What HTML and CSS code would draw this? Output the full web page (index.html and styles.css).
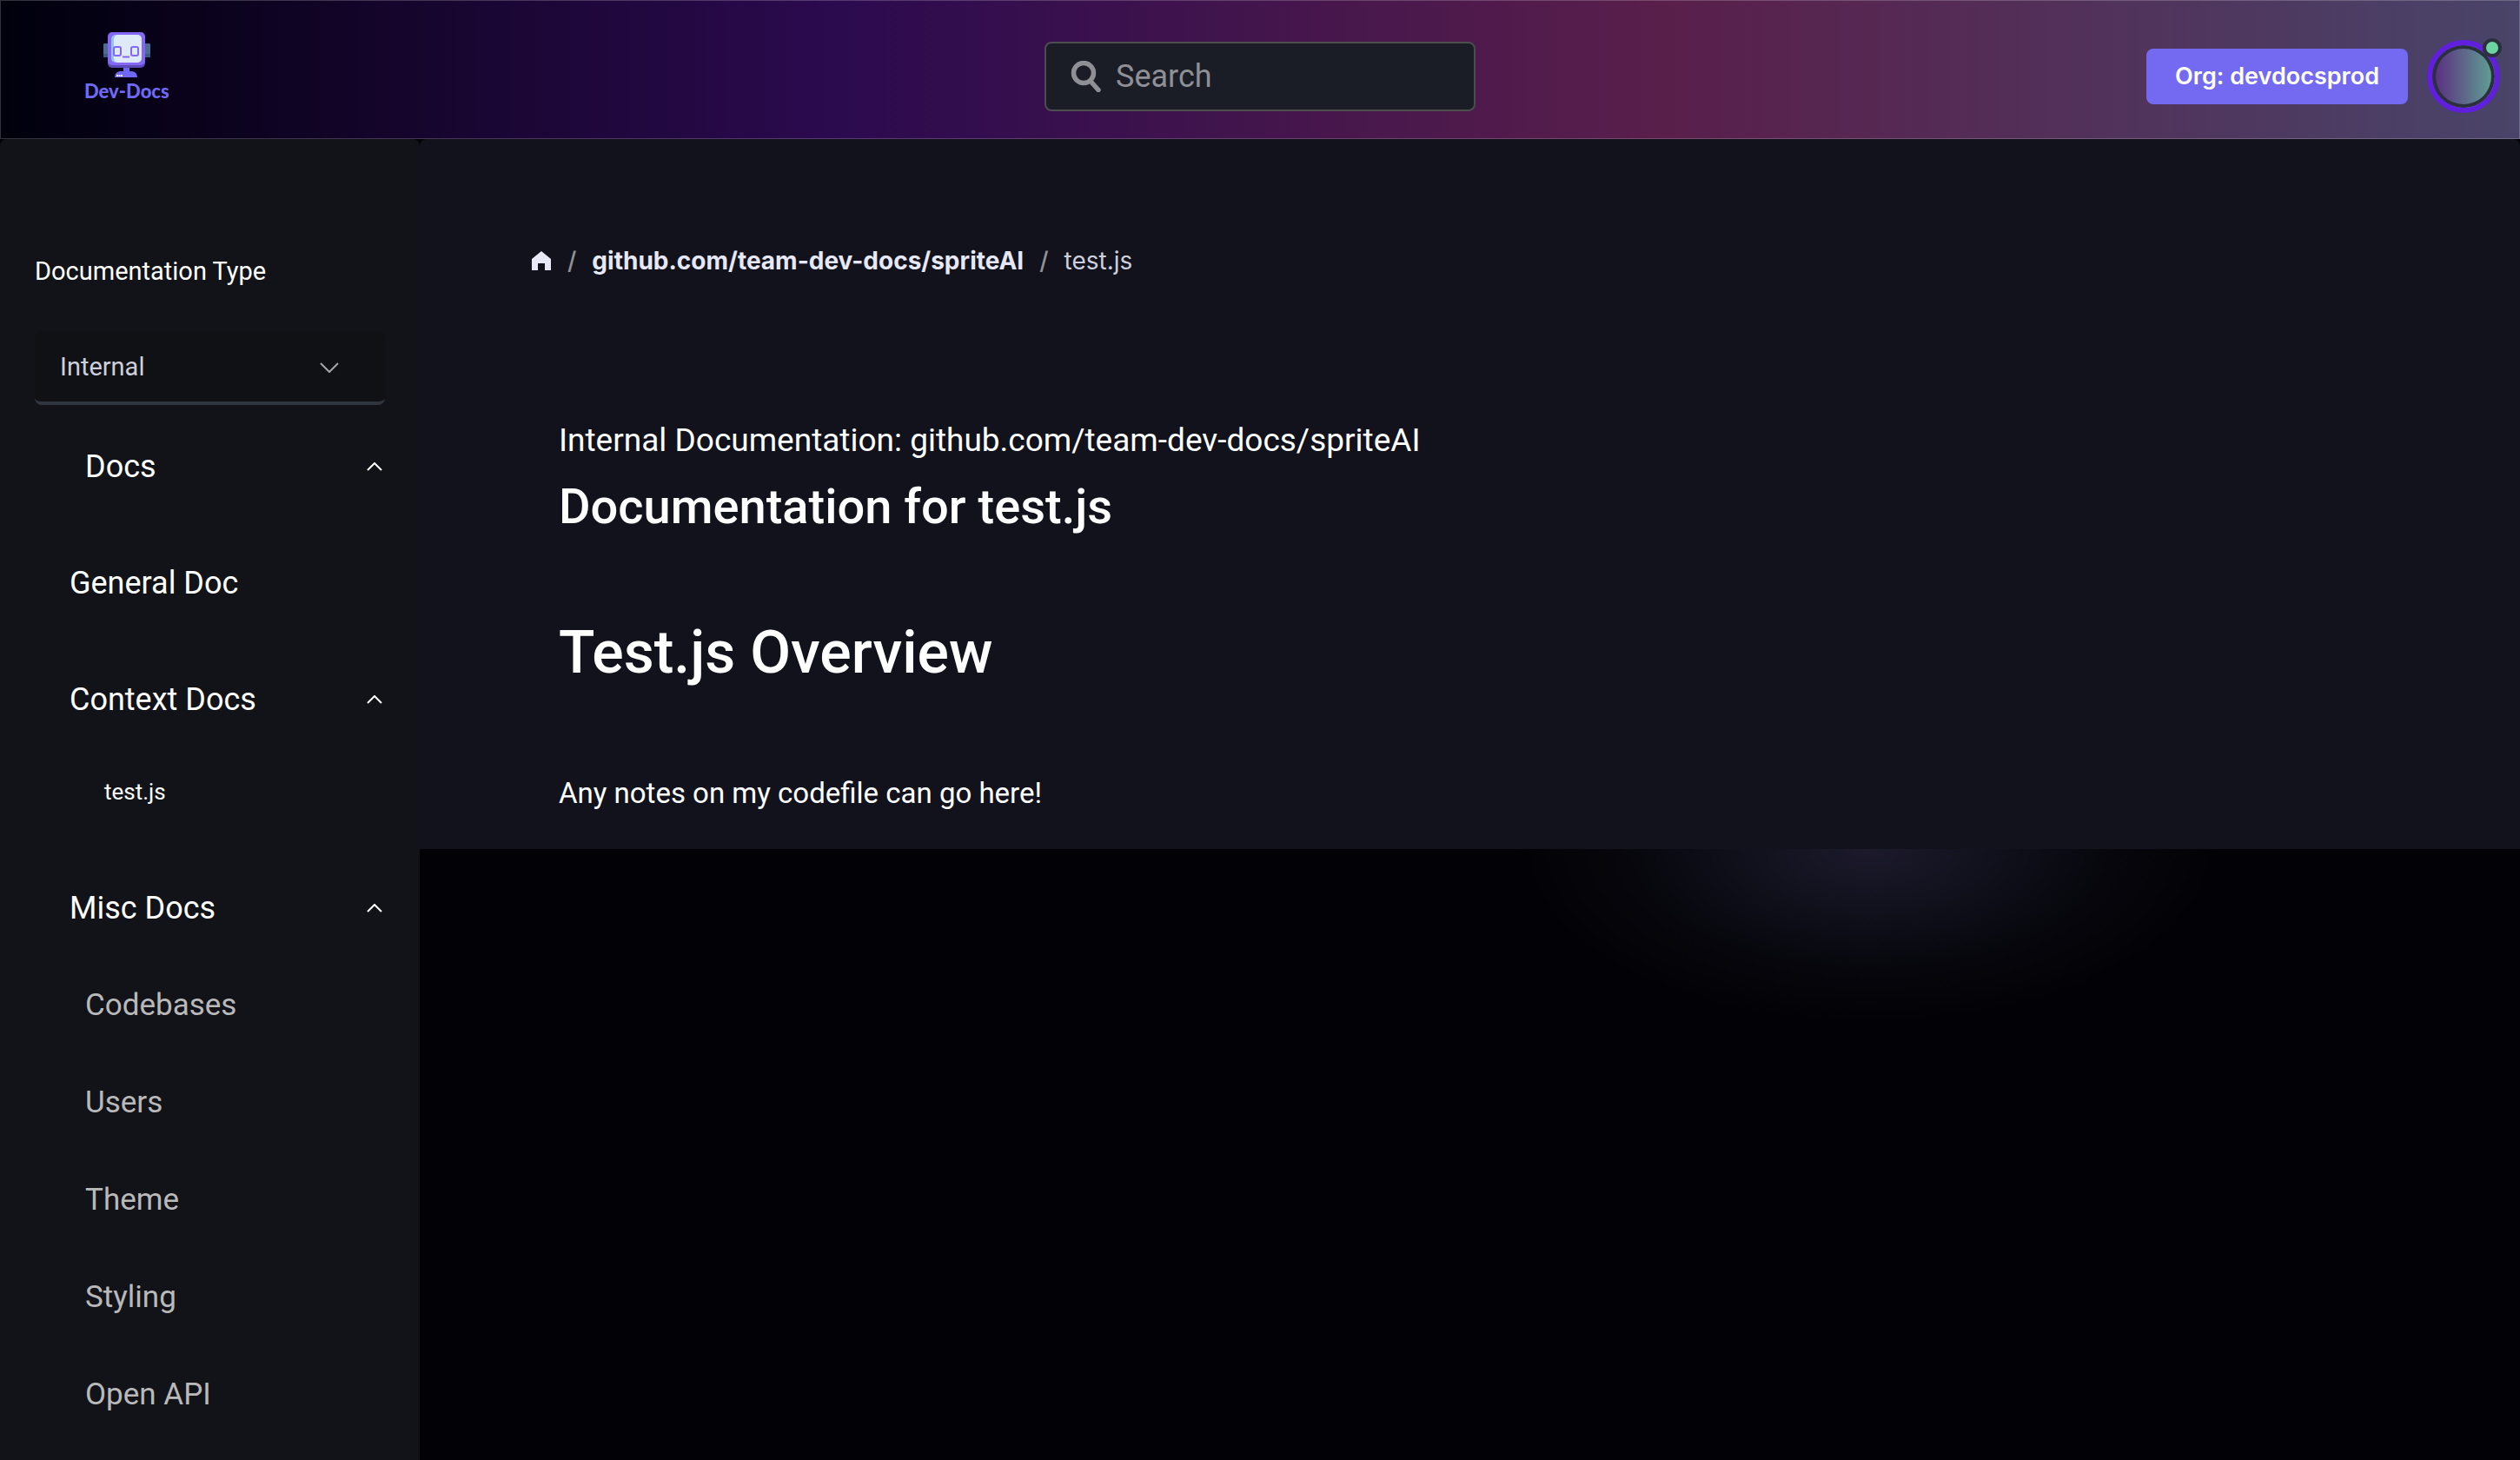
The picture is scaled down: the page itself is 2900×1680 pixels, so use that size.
FILE: index.html
```html
<!DOCTYPE html>
<html lang="en">
<head>
<meta charset="utf-8">
<meta name="viewport" content="width=device-width, initial-scale=1">
<title>Dev-Docs</title>
<link rel="stylesheet" href="styles.css">
</head>
<body>
<header class="topbar">
  <a class="logo" href="#">
    <svg class="logo-mark" viewBox="0 0 54 52" aria-hidden="true">
      <rect x="0" y="13" width="54" height="16" rx="1" fill="#4d6c92"/>
      <path d="M0 25h54v4H0z" fill="#3f5b7c"/>
      <rect x="5" y="2" width="43" height="39" rx="5" fill="#5a4bb5"/>
      <rect x="5" y="0" width="43" height="38" rx="5" fill="#8468f5"/>
      <rect x="9" y="3" width="35" height="32" rx="5" fill="#93c5f3"/>
      <rect x="12" y="3" width="32" height="32" rx="5" fill="#dfeaf8"/>
      <rect x="12" y="17" width="8" height="10" rx="2" fill="none" stroke="#8468f5" stroke-width="2"/>
      <rect x="32" y="17" width="8" height="10" rx="2" fill="none" stroke="#8468f5" stroke-width="2"/>
      <path d="M22 28.500h8" stroke="#8468f5" stroke-width="2"/>
      <path d="M23 41h7v4h3q6 1 6 7H13q0-6 6-7h4z" fill="#7067f2"/>
      <path d="M15 50h7" stroke="#e8e6ff" stroke-width="2" stroke-dasharray="2 .5"/>
    </svg>
    <span class="logo-name">Dev-Docs</span>
  </a>
  <label class="search">
    <svg class="search-icon" viewBox="0 0 34 36" fill="none" stroke="currentColor" aria-hidden="true">
      <circle cx="14" cy="14" r="11.500" stroke-width="5.500"/>
      <path d="M22.500 24 31 33.500" stroke-width="5.500" stroke-linecap="round"/>
    </svg>
    <input class="search-input" type="search" placeholder="Search" aria-label="Search">
  </label>
  <div class="account">
    <button class="org" type="button">Org: devdocsprod</button>
    <button class="avatar" type="button" aria-label="Account"><span class="status"></span></button>
  </div>
</header>

<div class="layout">
  <nav class="sidebar" aria-label="Documentation">
    <label class="type-label" for="doc-type">Documentation Type</label>
    <div class="select-wrap">
      <select class="select" id="doc-type"><option>Internal</option><option>External</option></select>
      <svg class="select-arrow" viewBox="0 0 22 12" aria-hidden="true"><path d="M1 1l10 10L21 1"/></svg>
    </div>
    <button class="item docs" type="button">Docs<svg class="chevron" viewBox="0 0 18 10" aria-hidden="true"><path d="M1 9l8-8 8 8"/></svg></button>
    <a class="item general" href="#">General Doc</a>
    <button class="item" type="button">Context Docs<svg class="chevron" viewBox="0 0 18 10" aria-hidden="true"><path d="M1 9l8-8 8 8"/></svg></button>
    <a class="item file" href="#">test.js</a>
    <button class="item" type="button">Misc Docs<svg class="chevron" viewBox="0 0 18 10" aria-hidden="true"><path d="M1 9l8-8 8 8"/></svg></button>
    <a class="item sub" href="#">Codebases</a>
    <a class="item sub" href="#">Users</a>
    <a class="item sub" href="#">Theme</a>
    <a class="item sub" href="#">Styling</a>
    <a class="item sub" href="#">Open API</a>
  </nav>

  <main class="main">
    <div class="panel">
      <nav class="crumbs" aria-label="Breadcrumb">
        <a class="home" href="#" aria-label="Home"><svg viewBox="0 0 22 22" aria-hidden="true"><path d="M11 0 22 9v13h-7v-8H7v8H0V9z"/></svg></a>
        <span class="slash">/</span>
        <a class="repo" href="#">github.com/team-dev-docs/spriteAI</a>
        <span class="slash">/</span>
        <span class="current">test.js</span>
      </nav>
      <article class="doc">
        <p class="source">Internal Documentation: github.com/team-dev-docs/spriteAI</p>
        <h1 class="title">Documentation for test.js</h1>
        <h2 class="overview">Test.js Overview</h2>
        <p class="notes">Any notes on my codefile can go here!</p>
      </article>
    </div>
    <div class="backdrop"></div>
  </main>
</div>
</body>
</html>
```
FILE: styles.css
```css
* { box-sizing: border-box; }

body {
  margin: 0;
  min-height: 100vh;
  display: flex;
  flex-direction: column;
  background: #020206;
  color: #fff;
  font-family: Roboto, "Noto Sans", sans-serif;
}

a { color: inherit; text-decoration: none; }
button { border: 0; margin: 0; color: inherit; font: inherit; cursor: pointer; }
svg { display: block; }

/* Top bar */
.topbar {
  display: grid;
  grid-template-columns: 1fr 496px 1fr;
  align-items: center;
  height: 160px;
  padding: 16px 22px 0;
  border: 1px solid rgba(255, 255, 255, .2);
  background: linear-gradient(90deg, #00000c, #2b0a4e 33%, #591f4b 66%, #494469) border-box;
}

.logo {
  justify-self: start;
  display: flex;
  flex-direction: column;
  align-items: center;
  gap: 2px;
  margin-left: 74px;
  padding-bottom: 20px;
}
.logo-mark { width: 54px; height: 52px; }
.logo-name {
  color: #7069f4;
  font: 900 22px/28px Lato, sans-serif;
}

.search {
  display: flex;
  align-items: center;
  gap: 16px;
  height: 80px;
  padding: 0 28px;
  border: 2px solid #4b4d4f;
  border-radius: 8px;
  background: #1b1d26;
  color: #8f9096;
}
.search-icon { flex: none; width: 36px; height: 36px; }
.search-input {
  flex: 1;
  min-width: 0;
  padding: 0;
  border: 0;
  outline: 0;
  background: none;
  color: #fff;
  font: 36px/48px Roboto, sans-serif;
}
.search-input::placeholder { color: #8f9096; opacity: 1; }

.account {
  justify-self: end;
  display: flex;
  align-items: center;
  gap: 22px;
}
.org {
  height: 64px;
  padding: 0 33px;
  border-radius: 8px;
  background: #736af1;
  font: 600 27px/32px Inter, sans-serif;
}
.avatar {
  position: relative;
  width: 84px;
  height: 84px;
  padding: 0;
  border: 6px solid #5f1fdd;
  border-radius: 50%;
  background: linear-gradient(90deg, #5b2a80, #5fa394);
  box-shadow: inset 0 0 0 4px #2b303d;
}
.status {
  position: absolute;
  top: -8px;
  right: -8px;
  width: 22px;
  height: 22px;
  border: 4px solid #2b303d;
  border-radius: 50%;
  background: #6dd3a0;
}

/* Page body */
.layout { display: flex; flex: 1; }

.sidebar {
  display: flex;
  flex-direction: column;
  flex: none;
  width: 483px;
  padding: 128px 40px 0;
  border-radius: 8px 8px 0 0;
  background: #121318;
}
.type-label {
  margin-bottom: 46px;
  font-size: 29px;
  line-height: 48px;
}
.select-wrap { position: relative; }
.select {
  appearance: none;
  width: 100%;
  height: 84px;
  padding: 0 29px;
  border: 0;
  border-bottom: 4px solid #303640;
  border-radius: 8px;
  background: #101115;
  color: #cdd0dc;
  font: 29px/40px Roboto, sans-serif;
}
.select-arrow {
  position: absolute;
  top: 35px;
  right: 53px;
  width: 22px;
  height: 12px;
  fill: none;
  stroke: #a6a7ac;
  stroke-width: 2;
  pointer-events: none;
}

.item {
  display: flex;
  align-items: center;
  justify-content: space-between;
  height: 112px;
  padding: 0 3px 0 40px;
  background: none;
  font-size: 36px;
  line-height: 48px;
  text-align: left;
}
.docs { margin-top: 15px; padding-left: 58px; }
.general { margin: 22px 0; }
.file { height: 100px; margin-bottom: 28px; padding-left: 80px; font-size: 26px; }
.sub { padding-left: 58px; color: #b9b9ba; font-size: 35px; }
.chevron {
  width: 18px;
  height: 10px;
  fill: none;
  stroke: #fff;
  stroke-width: 2;
}

.main { display: flex; flex-direction: column; flex: 1; min-width: 0; }
.panel {
  padding: 120px 128px 40px;
  border-radius: 8px 8px 0 0;
  background: #12121d;
}
.crumbs {
  display: flex;
  align-items: center;
  gap: 18px;
  color: #e6e8f5;
  font: 28px/40px Inter, sans-serif;
}
.home svg { width: 24px; height: 22px; fill: currentColor; }
.slash { color: #929296; font-weight: 500; }
.repo { font-weight: 700; }
.current { color: #cdd0dc; }

.doc { padding: 163px 32px 0; }
.source { margin: 0; font-size: 37px; line-height: 48px; }
.title { margin: 12px 0 80px; font-size: 56px; font-weight: 500; line-height: 80px; }
.overview { margin: 0 0 90px; font-size: 68px; font-weight: 500; line-height: 96px; }
.notes { margin: 0; font-size: 33px; line-height: 48px; }

.backdrop {
  flex: 1;
  background: radial-gradient(400px 200px at 69% 0, #1c1a2b, #11111d 35%, #06060c 70%, #020206);
}
```
